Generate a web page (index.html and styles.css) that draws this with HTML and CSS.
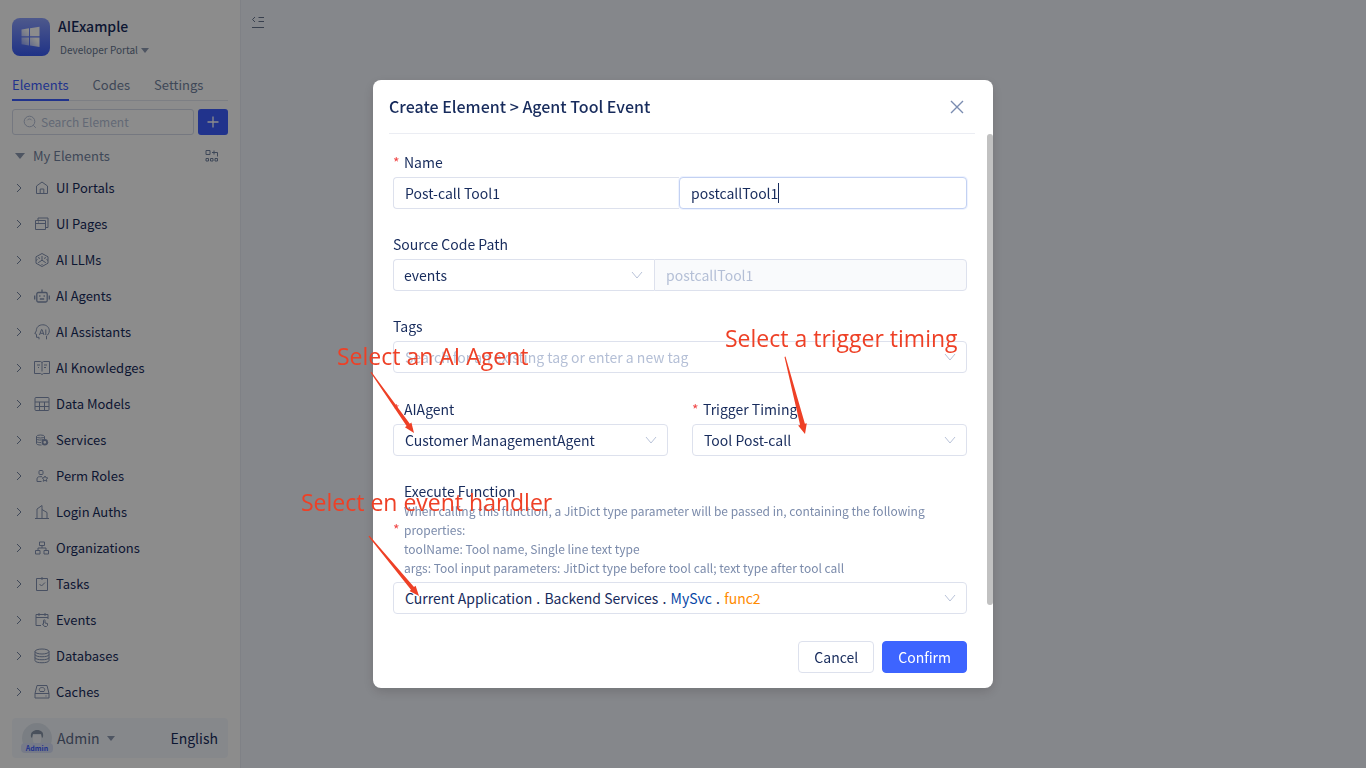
FILE: index.html
```html
<!DOCTYPE html>
<html lang="en">
<head>
<meta charset="utf-8">
<title>AIExample - Developer Portal</title>
<link rel="stylesheet" href="styles.css">
</head>
<body>
<div class="app">
  <aside class="sidebar">
    <header class="brand">
      <svg class="brand-logo" viewBox="0 0 38 38" aria-hidden="true">
        <defs>
          <linearGradient id="logoBg" x1="0" y1="0" x2="0" y2="1"><stop offset="0" stop-color="#8ea2ff"/><stop offset="1" stop-color="#3a5cf5"/></linearGradient>
          <linearGradient id="logoPane" x1="1" y1="0" x2="0" y2="1"><stop offset="0.4" stop-color="#fff"/><stop offset="1" stop-color="#fff" stop-opacity="0.25"/></linearGradient>
        </defs>
        <rect width="38" height="38" rx="8" fill="url(#logoBg)"/>
        <path fill="url(#logoPane)" d="M9.500 11.500l7.500-1.200v8H9.500zM18 10.200l9.500-1.500v9.600H18zM9.500 19.500H17v8l-7.500-1.200zM18 19.500h9.500v9.600L18 27.600z"/>
      </svg>
      <div class="brand-text">
        <h1 class="brand-name">AIExample</h1>
        <button class="portal-switch" type="button">Developer Portal <span class="caret-down"></span></button>
      </div>
    </header>
    <nav class="tabs">
      <a class="tab tab-active" href="#elements">Elements</a>
      <a class="tab" href="#codes">Codes</a>
      <a class="tab" href="#settings">Settings</a>
    </nav>
    <div class="search-row">
      <label class="search">
        <svg class="search-icon" viewBox="0 0 14 14" aria-hidden="true"><circle cx="6.500" cy="6.500" r="5.300"/><path d="M10.300 10.300l2.500 2.500M4.300 5.300a2.500 2.500 0 0 1 4.400 0"/></svg>
        <input class="search-input" type="text" placeholder="Search Element" aria-label="Search Element">
      </label>
      <button class="add-button" type="button" aria-label="Add element">
        <svg class="add-icon" viewBox="0 0 12 12"><path d="M6 0.500v11M0.500 6h11"/></svg>
      </button>
    </div>
    <div class="group-head">
      <span class="caret-down caret-group"></span>
      <span class="group-title">My Elements</span>
      <button class="layout-button" type="button" aria-label="Arrange elements">
        <svg class="icon-small" viewBox="0 0 14 14"><path d="M1 1.500h4v4H1zM7 3.500h4M9 1.500v4M10.500 3.500h2v4M1 9.500h2.500V12H1zM5.500 9.500H8V12H5.500zM10 9.500h2.500V12H10z"/></svg>
      </button>
    </div>
    <ul class="tree">
      <li><a class="tree-item" href="#ui-portals"><svg class="chevron" viewBox="0 0 6 10"><path d="M1 1l4 4-4 4"/></svg><svg class="icon" viewBox="0 0 16 16"><path d="M2.500 13.500V6L8 2l5.500 4v7.500zM6.200 13.500V9h3.600v4.500"/></svg>UI Portals</a></li>
      <li><a class="tree-item" href="#ui-pages"><svg class="chevron" viewBox="0 0 6 10"><path d="M1 1l4 4-4 4"/></svg><svg class="icon" viewBox="0 0 16 16"><path d="M4 4.500V2h10v9.500h-2.500M1.500 4.500h10v9h-10zM1.500 7.500h10M4 6h1"/></svg>UI Pages</a></li>
      <li><a class="tree-item" href="#ai-llms"><svg class="chevron" viewBox="0 0 6 10"><path d="M1 1l4 4-4 4"/></svg><svg class="icon" viewBox="0 0 16 16"><path d="M8 1.500l6 3.300v6.400l-6 3.300-6-3.300V4.800zM8 4v4.200l-3.800 2.500M8 8.200l3.800 2.500M4 5.500l2 1M12 5.500l-2 1M8 12v1M2 8.500l1.500-1M14 8.500l-1.500-1"/></svg>AI LLMs</a></li>
      <li><a class="tree-item" href="#ai-agents"><svg class="chevron" viewBox="0 0 6 10"><path d="M1 1l4 4-4 4"/></svg><svg class="icon icon-bold" viewBox="0 0 16 16"><rect x="2.800" y="4.500" width="10.400" height="9.500" rx="1.500"/><path d="M8 1.500v3M0.700 7.500v4M15.300 7.500v4M5.800 7.300v1.500M10.200 7.300v1.500M5.800 11h4.400"/></svg>AI Agents</a></li>
      <li><a class="tree-item" href="#ai-assistants"><svg class="chevron" viewBox="0 0 6 10"><path d="M1 1l4 4-4 4"/></svg><svg class="icon" viewBox="0 0 16 16"><path d="M5 15.300v-2H2.500v-3L0.800 9.500l1.500-2.600C2.300 3 5 0.800 8.800 0.800c3.700 0 6.500 2.500 6.500 6 0 2.500-1.500 4-2.800 5.200v3.300M5.500 11l2-5.500h.500l2 5.500M6.300 9.300h3M11.800 5.500V11"/></svg>AI Assistants</a></li>
      <li><a class="tree-item" href="#ai-knowledges"><svg class="chevron" viewBox="0 0 6 10"><path d="M1 1l4 4-4 4"/></svg><svg class="icon" viewBox="0 0 16 16"><path d="M6.500 13.500h-6v-12h6L8 2.500l1.500-1h6v12h-6L8 14.500zM8 2.500v9M3 5h3M4 7.500h1M10 5h3M10 7.500h2"/></svg>AI Knowledges</a></li>
      <li><a class="tree-item" href="#data-models"><svg class="chevron" viewBox="0 0 6 10"><path d="M1 1l4 4-4 4"/></svg><svg class="icon" viewBox="0 0 16 16"><rect x="1" y="1.500" width="14" height="13" rx="1"/><path d="M1 6h14M1 10.500h14M5.500 6v8.500M10.500 6v8.500"/></svg>Data Models</a></li>
      <li><a class="tree-item" href="#services"><svg class="chevron" viewBox="0 0 6 10"><path d="M1 1l4 4-4 4"/></svg><svg class="icon" viewBox="0 0 16 16"><ellipse cx="6.500" cy="4.500" rx="4" ry="1.500"/><path d="M2.500 4.500v7c0 1 2 1.500 4 1.500h1M2.500 7c1 1.300 5 1.300 7 .5M2.500 9.500c1 1 3 1.200 4.500 1M10.500 4.500V7"/><circle cx="10.800" cy="10.300" r="2.300" stroke-width="1.800"/><path d="M12 13l2-2.500"/></svg>Services</a></li>
      <li><a class="tree-item" href="#perm-roles"><svg class="chevron" viewBox="0 0 6 10"><path d="M1 1l4 4-4 4"/></svg><svg class="icon" viewBox="0 0 16 16"><rect x="5" y="2.500" width="4" height="4" rx="1"/><path d="M7.500 13.500H3V11c0-1.500 1-2.300 2.500-2.300H8M11 8l.9 1.700 1.900.3-1.400 1.300.4 2-1.800-1-1.800 1 .4-2L8.200 10l1.900-.3z"/></svg>Perm Roles</a></li>
      <li><a class="tree-item" href="#login-auths"><svg class="chevron" viewBox="0 0 6 10"><path d="M1 1l4 4-4 4"/></svg><svg class="icon" viewBox="0 0 16 16"><path d="M1 14.500h14M3 14.500V5l5-3.500v13M8 5.500l5 3v6"/></svg>Login Auths</a></li>
      <li><a class="tree-item" href="#organizations"><svg class="chevron" viewBox="0 0 6 10"><path d="M1 1l4 4-4 4"/></svg><svg class="icon" viewBox="0 0 16 16"><path d="M5.500 2h5v3.500h-5zM1.500 10.500H6V14H1.500zM10 10.500h4.500V14H10zM8 5.500V8M4 10.500V8h8v2.500"/></svg>Organizations</a></li>
      <li><a class="tree-item" href="#tasks"><svg class="chevron" viewBox="0 0 6 10"><path d="M1 1l4 4-4 4"/></svg><svg class="icon" viewBox="0 0 16 16"><path d="M2.500 2.500h11v12h-11zM8 1v3M5.500 8l2 2 3.500-3.500"/></svg>Tasks</a></li>
      <li><a class="tree-item" href="#events"><svg class="chevron" viewBox="0 0 6 10"><path d="M1 1l4 4-4 4"/></svg><svg class="icon" viewBox="0 0 16 16"><path d="M7 13.500H2v-11h12V7M2 5.500h12M5 1v3M11 1v3M9.500 12V8.500c0-1 1.500-1 1.500 0V11l2.500.5v2l-1 1h-2L8.500 12z"/></svg>Events</a></li>
      <li><a class="tree-item" href="#databases"><svg class="chevron" viewBox="0 0 6 10"><path d="M1 1l4 4-4 4"/></svg><svg class="icon" viewBox="0 0 16 16"><ellipse cx="8" cy="3.500" rx="7" ry="2.500"/><path d="M1 3.500v9c0 3 14 3 14 0v-9M1 6.500c0 3 14 3 14 0M1 9.500c0 3 14 3 14 0"/></svg>Databases</a></li>
      <li><a class="tree-item" href="#caches"><svg class="chevron" viewBox="0 0 6 10"><path d="M1 1l4 4-4 4"/></svg><svg class="icon" viewBox="0 0 16 16"><path d="M1 9.500l2-8h10l2 8V14H1zM1 9.500h14M11.500 12h1M6 7.500C4 4.500 6.500 3.500 8 3.500s4 1 2 4z"/></svg>Caches</a></li>
    </ul>
    <footer class="user-bar">
      <span class="avatar">
        <svg class="avatar-face" viewBox="0 0 30 30" aria-hidden="true"><circle cx="15" cy="15" r="15" fill="#dfe6ee"/><path fill="#8794a8" d="M9 14c-1-5 3-7 6-7 4 0 7 2 6 7l-1 1-1-4h-8l-1 4z"/><path fill="#f0f3f7" d="M11 12h8v5a4 4 0 0 1-8 0z"/></svg>
        <span class="avatar-tag">Admin</span>
      </span>
      <button class="user-menu" type="button">Admin <span class="caret-down"></span></button>
      <button class="language" type="button">English</button>
    </footer>
  </aside>
  <main class="workspace">
    <button class="collapse" type="button" aria-label="Collapse sidebar">
      <svg class="collapse-icon" viewBox="0 0 14 12"><path d="M4 1L1.500 3.500 4 6M7.500 1.500H13M7.500 5.500H13M1 11.500h12"/></svg>
    </button>
  </main>
</div>

<div class="overlay">
  <section class="dialog" role="dialog" aria-labelledby="dialog-title">
    <header class="dialog-head">
      <h2 class="dialog-title" id="dialog-title">Create Element &gt; Agent Tool Event</h2>
      <button class="close" type="button" aria-label="Close"><svg class="close-icon" viewBox="0 0 14 14"><path d="M1 1l12 12M13 1L1 13"/></svg></button>
    </header>
    <div class="dialog-body">
      <form class="form">
        <div class="field">
          <label class="label" for="name"><span class="required">*</span>Name</label>
          <div class="halves">
            <input class="control control-left" id="name" type="text" value="Post-call Tool1">
            <div class="caret-box">
              <input class="control control-focus" type="text" value="postcallTool1" aria-label="Element id">
              <span class="text-caret"></span>
            </div>
          </div>
        </div>
        <div class="field">
          <label class="label" for="path">Source Code Path</label>
          <div class="joined">
            <div class="select-box path-select">
              <select class="control control-left select-tight" id="path"><option>events</option></select>
              <svg class="arrow" viewBox="0 0 12 8"><path d="M1 1l5 6 5-6"/></svg>
            </div>
            <input class="control control-right path-name" type="text" value="postcallTool1" aria-label="Source folder" disabled>
          </div>
        </div>
        <div class="field">
          <label class="label" for="tags">Tags</label>
          <div class="select-box">
            <input class="control" id="tags" type="text" placeholder="Search for an existing tag or enter a new tag">
            <svg class="arrow" viewBox="0 0 12 8"><path d="M1 1l5 6 5-6"/></svg>
          </div>
        </div>
        <div class="columns">
          <div class="field">
            <label class="label" for="agent"><span class="required">*</span>AIAgent</label>
            <div class="select-box">
              <select class="control" id="agent"><option>Customer ManagementAgent</option></select>
              <svg class="arrow" viewBox="0 0 12 8"><path d="M1 1l5 6 5-6"/></svg>
            </div>
          </div>
          <div class="field">
            <label class="label" for="timing"><span class="required">*</span>Trigger Timing</label>
            <div class="select-box">
              <select class="control" id="timing"><option>Tool Post-call</option></select>
              <svg class="arrow" viewBox="0 0 12 8"><path d="M1 1l5 6 5-6"/></svg>
            </div>
          </div>
        </div>
        <div class="field">
          <label class="label" for="handler">
            <span class="required">*</span>
            <span>Execute Function
              <span class="hint">When calling this function, a JitDict type parameter will be passed in, containing the following properties:<br>toolName: Tool name, Single line text type<br>args: Tool input parameters: JitDict type before tool call; text type after tool call</span>
            </span>
          </label>
          <div class="select-box">
            <button class="control" id="handler" type="button" aria-haspopup="listbox">Current Application <span class="dot">.</span> Backend Services <span class="dot">.</span> <span class="service">MySvc</span> <span class="dot">.</span> <span class="function">func2</span></button>
            <svg class="arrow" viewBox="0 0 12 8"><path d="M1 1l5 6 5-6"/></svg>
          </div>
        </div>
        <div class="actions">
          <button class="button" type="button">Cancel</button>
          <button class="button button-primary" type="button">Confirm</button>
        </div>
      </form>
      <div class="scrollbar"></div>
    </div>
    <svg class="arrows" viewBox="0 0 620 608" aria-hidden="true">
      <path d="M-2.500 292.500L-1.500 292 36.800 343.700 38.400 342.600 41 353 31.900 347.200 33.600 346z"/>
      <path d="M411.500 277L412.500 276.500 431.900 343.700 433.800 343.200 432 354 425.100 345.400 427.100 344.900z"/>
      <path d="M-4.500 456.500L-3.500 455.800 41 507.100 42.600 505.800 46 516 36.500 511 38 509.700z"/>
    </svg>
    <p class="note note-agent">Select an AI Agent</p>
    <p class="note note-timing">Select a trigger timing</p>
    <p class="note note-handler">Select en event handler</p>
  </section>
</div>
</body>
</html>
```
FILE: styles.css
```css
* { box-sizing: border-box; }

body {
  margin: 0;
  font-family: "Noto Sans CJK SC", "Noto Sans", sans-serif;
  font-size: 14px;
  line-height: 20px;
  color: #172b5c;
}

button, input, select { font: inherit; color: inherit; }
button { border: 0; padding: 0; background: none; }
a { color: inherit; text-decoration: none; }
h1, h2, p, ul { margin: 0; padding: 0; }
h1, h2 { font-weight: 500; }
ul { list-style: none; }
svg { display: block; flex: none; fill: none; stroke: currentColor; }

.app { display: flex; min-height: 100vh; }

/* Sidebar */
.sidebar {
  display: flex;
  flex-direction: column;
  flex: none;
  width: 241px;
  padding: 16px 12px 10px;
  border-right: 1px solid #e8ebf5;
  background: #fff;
}
.brand { display: flex; gap: 8px; height: 56px; }
.brand-logo { width: 38px; height: 38px; margin-top: 2px; stroke: none; }
.brand-text { display: flex; flex-direction: column; gap: 4px; align-items: flex-start; }
.brand-name { font-size: 14px; line-height: 20px; }
.portal-switch { display: flex; align-items: center; gap: 3px; padding-left: 2px; font-size: 10px; color: #66758f; }
.caret-down { width: 0; border: 4px solid transparent; border-top: 5px solid #8e9bb3; border-bottom: 0; }

.tabs { display: flex; gap: 24px; border-bottom: 1px solid #e3e7f1; font-size: 13px; color: #7383a0; }
.tab { padding: 3px 0 4px; border-bottom: 2px solid transparent; margin-bottom: -1px; }
.tab-active { border-color: #3d5eff; color: #3d5eff; }

.search-row { display: flex; gap: 4px; margin-top: 8px; }
.search { display: flex; flex: 1; align-items: center; gap: 4px; height: 26px; padding: 0 10px; border: 1px solid #d5daea; border-radius: 3px; color: #b5bfd6; }
.search-icon { width: 14px; height: 14px; }
.search-input { width: 100%; min-width: 0; padding: 0; border: 0; background: none; font-size: 12px; }
.search-input::placeholder { color: #b5bfd6; }
.add-button { display: flex; align-items: center; justify-content: center; width: 30px; border-radius: 3px; background: #3d5eff; color: #fff; }
.add-icon { width: 12px; height: 12px; stroke-width: 1.3; }

.group-head { display: flex; align-items: center; gap: 8px; height: 35px; padding: 6px 9px 0 3px; font-size: 13px; color: #7383a0; }
.caret-group { border-width: 6px 5px 0; }
.group-title { flex: 1; }
.icon-small { width: 14px; height: 14px; }

.tree-item { display: flex; align-items: center; height: 36px; padding-left: 4px; font-size: 13px; }
.chevron { width: 6px; height: 10px; margin-right: 12px; color: #7383a0; }
.icon { width: 16px; height: 16px; margin-right: 6px; color: #8493b2; }
.icon-bold { stroke-width: 1.3; }

.user-bar { display: flex; align-items: center; height: 40px; margin-top: auto; padding: 0 10px; border-radius: 4px; background: #f5f8fd; }
.avatar { position: relative; width: 30px; height: 30px; margin-right: 5px; }
.avatar-face { width: 30px; height: 30px; stroke: none; }
.avatar-tag { position: absolute; left: -1px; right: -1px; bottom: 0; border-radius: 4px; background: #d9e0f8; color: #3d5eff; font-size: 7px; line-height: 10px; font-weight: 700; text-align: center; }
.user-menu { display: flex; align-items: center; gap: 7px; flex: 1; color: #5b6a88; }

/* Workspace */
.workspace { flex: 1; padding: 12px 10px; background: #f3f6fd; }
.collapse { color: #66758f; }
.collapse-icon { width: 14px; height: 12px; }

/* Dialog */
.overlay { position: fixed; inset: 0; display: flex; align-items: flex-start; justify-content: center; padding-top: 80px; background: rgba(0, 0, 0, 0.45); }
.dialog { position: relative; width: 620px; border-radius: 8px; background: #fff; box-shadow: 0 4px 12px rgba(0, 0, 0, 0.15); }
.dialog-head { display: flex; align-items: center; justify-content: space-between; height: 54px; margin: 0 18px 0 16px; padding-right: 11px; border-bottom: 1px solid #ebedf3; }
.dialog-title { padding-bottom: 2px; font-size: 16px; line-height: 24px; }
.close-icon { width: 14px; height: 14px; color: #7a8cb0; stroke-width: 1.4; }
.dialog-body { display: flex; }
.form { flex: 1; padding: 15px 20px; }
.scrollbar { width: 6px; height: 471px; border-radius: 3px; background: #c1c1c1; }

.field { margin-bottom: 22px; }
.label { display: flex; align-items: center; padding: 3px 0 5px; }
.required { width: 11px; flex: none; color: #f04848; font-size: 14px; }
.hint { display: block; font-size: 12px; line-height: 19px; color: #7b8bab; }

.control {
  display: block;
  width: 100%;
  height: 32px;
  padding: 0 11px;
  border: 1px solid #dde1ed;
  border-radius: 4px;
  background: #fff;
  text-align: left;
  appearance: none;
}
.control::placeholder { color: #b4bfd6; opacity: 1; }
.control:disabled { background: #f9fafc; color: #b4bfd6; }
.control-left { border-right: 0; border-radius: 4px 0 0 4px; }
.control-right { border-radius: 0 4px 4px 0; }
.control-focus { border-color: #c3d1f2; box-shadow: 0 0 0 1px #eef3ff; }
.select-tight { padding-left: 10px; }
.joined { display: flex; }
.halves { display: grid; grid-template-columns: 286px 1fr; }
.caret-box, .select-box { position: relative; }
.text-caret { position: absolute; left: 99px; top: 6px; width: 1px; height: 20px; background: #172b5c; }
.path-select { flex: 0 0 261px; }
.path-name { flex: 1; }
.arrow { position: absolute; right: 11px; top: 12px; width: 12px; height: 8px; color: #b9c3d9; pointer-events: none; }
.columns { display: grid; grid-template-columns: 1fr 1fr; gap: 24px; padding-top: 1px; }
.dot { margin: 0 1px; }
.service { color: #0747a6; }
.function { color: #ff8b00; }

.actions { display: flex; justify-content: flex-end; gap: 8px; padding-top: 5px; }
.button { height: 32px; padding: 0 15px; border: 1px solid #dde1ed; border-radius: 4px; }
.button-primary { border-color: #3d64ff; background: #3d64ff; color: #fff; }

/* Annotations */
.arrows { position: absolute; inset: 0; width: 100%; height: 100%; overflow: visible; fill: #ee4026; stroke: none; pointer-events: none; }
.note { position: absolute; font-family: "Open Sans", sans-serif; font-size: 23px; line-height: 30px; font-weight: 400; color: #ee4026; white-space: nowrap; }
.note-agent { left: -36px; top: 261px; }
.note-timing { left: 352px; top: 243px; }
.note-handler { left: -72px; top: 407px; }
```
